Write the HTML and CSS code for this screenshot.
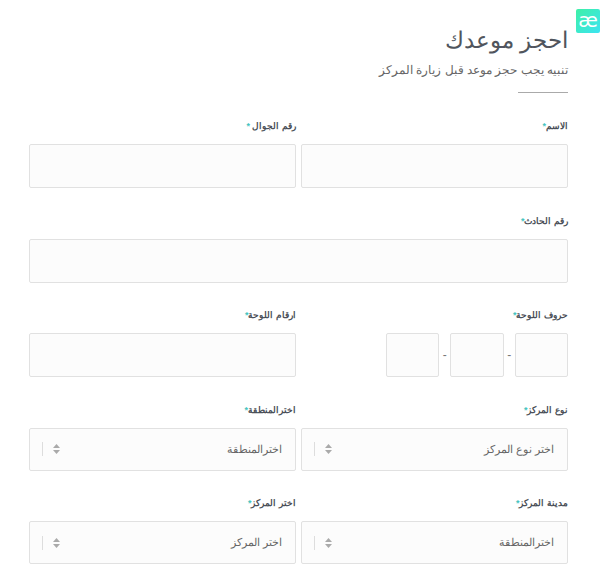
FILE: index.html
```html
<!DOCTYPE html>
<html lang="ar" dir="rtl">
<head>
    <meta charset="UTF-8">
    <meta name="viewport" content="width=device-width, initial-scale=1.0">
    <title>احجز موعدك</title>
    <link rel="stylesheet" href="styles.css">
</head>
<body>

    <a class="badge" href="#">æ</a>

    <div class="page">
        <h1>احجز موعدك</h1>
        <p class="note">تنبيه يجب حجز موعد قبل زيارة المركز</p>
        <div class="rule"></div>

        <form class="booking">
            <div class="row">
                <div class="field">
                    <label>الاسم<span class="req">*</span></label>
                    <input class="box" type="text">
                </div>
                <div class="field">
                    <label>رقم الجوال <span class="req">*</span></label>
                    <input class="box" type="text">
                </div>
            </div>

            <div class="row">
                <div class="field wide">
                    <label>رقم الحادث<span class="req">*</span></label>
                    <input class="box" type="text">
                </div>
            </div>

            <div class="row">
                <div class="field">
                    <label>حروف اللوحة<span class="req">*</span></label>
                    <div class="plate">
                        <input class="box" type="text">
                        <span class="dash">-</span>
                        <input class="box" type="text">
                        <span class="dash">-</span>
                        <input class="box" type="text">
                    </div>
                </div>
                <div class="field">
                    <label>ارقام اللوحة<span class="req">*</span></label>
                    <input class="box" type="text">
                </div>
            </div>

            <div class="row">
                <div class="field">
                    <label>نوع المركز<span class="req">*</span></label>
                    <div class="box select">
                        <span>اختر نوع المركز</span>
                        <span class="arrows"><svg width="7" height="12" viewBox="0 0 7 12"><path d="M3.5 1 7 5H0zM3.5 11 0 7h7z"/></svg></span>
                    </div>
                </div>
                <div class="field">
                    <label>اخترالمنطقة<span class="req">*</span></label>
                    <div class="box select">
                        <span>اخترالمنطقة</span>
                        <span class="arrows"><svg width="7" height="12" viewBox="0 0 7 12"><path d="M3.5 1 7 5H0zM3.5 11 0 7h7z"/></svg></span>
                    </div>
                </div>
            </div>

            <div class="row">
                <div class="field">
                    <label>مدينة المركز<span class="req">*</span></label>
                    <div class="box select">
                        <span>اخترالمنطقة</span>
                        <span class="arrows"><svg width="7" height="12" viewBox="0 0 7 12"><path d="M3.5 1 7 5H0zM3.5 11 0 7h7z"/></svg></span>
                    </div>
                </div>
                <div class="field">
                    <label>اختر المركز<span class="req">*</span></label>
                    <div class="box select">
                        <span>اختر المركز</span>
                        <span class="arrows"><svg width="7" height="12" viewBox="0 0 7 12"><path d="M3.5 1 7 5H0zM3.5 11 0 7h7z"/></svg></span>
                    </div>
                </div>
            </div>
        </form>
    </div>

</body>
</html>
```

FILE: styles.css
```css
* {
    box-sizing: border-box;
}

body {
    margin: 0;
    background: #fff;
    color: #555;
    font-family: "Liberation Sans", Arial, "Noto Sans", sans-serif;
    overflow: hidden;
}

/* floats over the top corner of the page */
.badge {
    position: absolute;
    top: 9px;
    left: 576px;
    width: 24px;
    height: 24px;
    border-radius: 2px;
    background: linear-gradient(135deg, #3ef0a6, #3ce4f2);
    color: #fff;
    font-family: "DejaVu Sans", sans-serif;
    font-size: 20px;
    line-height: 22px;
    text-align: center;
    text-decoration: none;
}

.page {
    padding: 24px 35px 0 29px;
}

h1 {
    margin: 0;
    font-size: 23px;
    font-weight: normal;
    line-height: 32px;
    color: #50555d;
}

.note {
    margin: 5px 0 0;
    font-size: 12px;
    line-height: 18px;
    color: #666;
}

.rule {
    width: 50px;
    height: 1px;
    margin-top: 13px;
    background: #aaa;
}

.booking {
    margin-top: 24px;
}

.row {
    display: flex;
    gap: 5px;
    margin-bottom: 23.5px;
}

.field {
    width: 267px;
}

.wide {
    width: 100%;
}

label {
    display: block;
    height: 27px;
    font-size: 9px;
    font-weight: bold;
    line-height: 18px;
    color: #4a4f57;
}

.req {
    color: #45c4c0;
}

.box {
    display: block;
    width: 100%;
    height: 44px;
    border: 1px solid #e1e1e1;
    border-radius: 2px;
    background: #fcfcfc;
}

.plate {
    display: flex;
    align-items: center;
    width: 182px;
}

.plate .box {
    flex: 1 1 0;
    min-width: 0;
}

.dash {
    width: 11px;
    text-align: center;
    font-size: 12px;
    color: #777;
}

.select {
    display: flex;
    align-items: center;
    justify-content: space-between;
    height: 43px;
    padding: 0 13px 0 12px;
    font-size: 11px;
    color: #666;
}

.arrows {
    display: flex;
    align-items: center;
    height: 14px;
    border-left: 1px solid #ddd;
}

.arrows svg {
    display: block;
    margin-left: 10px;
    fill: #aaa;
}
```
